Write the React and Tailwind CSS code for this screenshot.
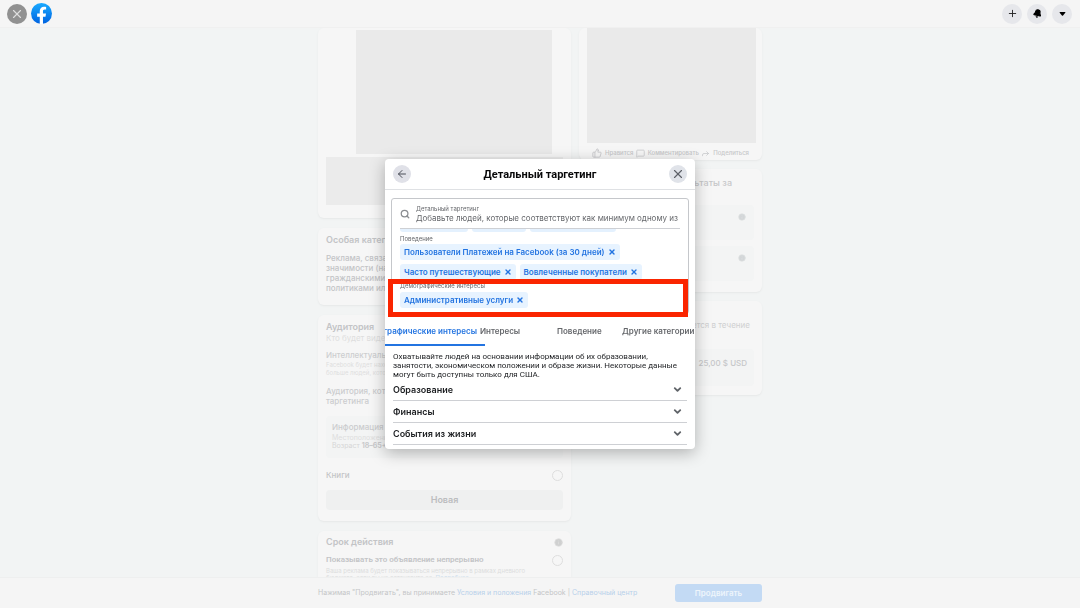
import { ArrowLeft, Bell, ChevronDown, Forward, Info, MessageSquare, Plus, Search, ThumbsUp, X } from "lucide-react";

const behaviorChips = ["Пользователи Платежей на Facebook (за 30 дней)", "Часто путешествующие", "Вовлеченные покупатели"];
const tabs = ["Интересы", "Поведение", "Другие категории"];
const sections = ["Образование", "Финансы", "События из жизни"];

function FacebookLogo() {
  return (
    <svg viewBox="0 0 40 40" className="size-[21px]" aria-label="Facebook">
      <defs>
        <linearGradient id="fb" x1="0" y1="0" x2="0" y2="1">
          <stop offset="0" stopColor="#19aaff" />
          <stop offset="1" stopColor="#0062e0" />
        </linearGradient>
      </defs>
      <circle cx="20" cy="20" r="20" fill="url(#fb)" />
      <path
        fill="#fff"
        d="M16.7 39.8V26H11.7V20h5V15.8c0-5.6 3.1-8.8 8.1-8.8 1.5 0 3 .2 4 .4v5.1h-2.7c-2.5 0-3.3 1.5-3.3 3.2V20h5.8l-1 6h-4.8v13.8a20 20 0 0 1-6.1 0z"
      />
    </svg>
  );
}

function Card({ className = "", children }) {
  return (
    <section className={`shrink-0 rounded-md bg-[#f6f6f6] px-2 shadow-[0_1px_2px_#e6e8e8] ${className}`}>{children}</section>
  );
}

function RoundButton({ label, className = "", children }) {
  return (
    <button type="button" aria-label={label} className={`flex shrink-0 items-center justify-center rounded-full ${className}`}>
      {children}
    </button>
  );
}

function TopBar() {
  return (
    <header className="flex h-7 shrink-0 items-center justify-between border-b border-[#f0f0f0] bg-[#f5f5f5] pr-2 pl-[7px]">
      <div className="flex items-center gap-1">
        <RoundButton label="Закрыть" className="size-5 bg-[#919191] text-[#dedede]">
          <X size={14} strokeWidth={2} />
        </RoundButton>
        <FacebookLogo />
      </div>
      <div className="flex items-center gap-[5px]">
        <RoundButton label="Создать" className="size-5 bg-[#e6e7eb] text-[#222]">
          <Plus size={11} strokeWidth={2} />
        </RoundButton>
        <RoundButton label="Уведомления" className="size-5 bg-[#e6e7eb] text-black">
          <Bell size={9} strokeWidth={3} fill="currentColor" className="rotate-12" />
        </RoundButton>
        <RoundButton label="Аккаунт" className="size-5 bg-[#e6e7eb] text-black">
          <svg viewBox="0 0 8 5" className="h-1 w-[7px]">
            <path d="M1 0h6q1 0 .5 1L4.700 4.400q-.7.700-1.400 0L.5 1Q0 0 1 0z" fill="currentColor" />
          </svg>
        </RoundButton>
      </div>
    </header>
  );
}

function LeftColumn() {
  return (
    <div className="flex w-[253px] flex-col gap-[10px] text-[#c3c4c6]">
      <Card className="h-[190px] pt-0.5">
        <div className="ml-[30px] h-[124px] w-[196px] bg-[#eaeaea]" />
        <div className="mt-[3px] h-12 bg-[#ebebeb]" />
      </Card>

      <Card className="h-[77px] pt-[5px]">
        <h2 className="text-[9px] leading-[14px] font-semibold">Особая категория рекламы</h2>
        <p className="mt-1.5 text-[8px] leading-[10px] font-medium">
          Реклама, связанная с вопросами общественной
          <br />
          значимости (например, с выборами,
          <br />
          гражданскими правами), а также с
          <br />
          политиками или жильем
        </p>
      </Card>

      <Card className="h-[206px] pt-[5px]">
        <h2 className="text-[9px] leading-[14px] font-semibold">Аудитория</h2>
        <p className="text-[8px] leading-2 text-[#dedede]">Кто будет видеть вашу рекламу?</p>
        <h3 className="mt-[7px] text-[8px] leading-3 font-medium text-[#cdced0]">Интеллектуальная аудитория</h3>
        <p className="text-[6px] leading-2 text-[#dedede]">
          Facebook будет находить и показывать
          <br />
          больше людей, которых заинтересует
        </p>
        <h3 className="mt-[9px] text-[8px] leading-[10px] font-medium text-[#cbccce]">
          Аудитория, которую вы выбрали с помощью
          <br />
          таргетинга
        </h3>
        <div className="mt-2.5 h-[42px] rounded bg-[#f3f4f4] px-1.5 pt-1.5">
          <h4 className="text-[8px] leading-[10px] font-medium text-[#cbccce]">Информация об аудитории</h4>
          <p className="mt-0.5 text-[7px] leading-2 text-[#dedede]">Местоположение: Россия</p>
          <p className="text-[7px] leading-2 text-[#d6d6d6]">
            Возраст <b className="text-[#c9cacc]">18–65+</b>
          </p>
        </div>
        <label className="mt-[11px] flex items-center justify-between text-[8px] leading-3 font-medium">
          Книги
          <input type="radio" name="audience" className="size-[11px] appearance-none rounded-full border border-[#dedede]" />
        </label>
        <button type="button" className="mt-[9px] h-5 w-full rounded bg-[#eff0f0] text-[9px] font-semibold text-[#bcbdbf]">
          Новая
        </button>
      </Card>

      <Card className="h-24 pt-1">
        <div className="flex items-center justify-between">
          <h2 className="text-[9px] leading-[14px] font-semibold">Срок действия</h2>
          <Info size={9} fill="#cfd0d0" color="#dedede" />
        </div>
        <label className="mt-1 flex items-center justify-between font-[Roboto,sans-serif] text-[8px] leading-[14px] font-semibold">
          Показывать это объявление непрерывно
          <input type="radio" name="duration" className="size-[11px] appearance-none rounded-full border border-[#dedede]" />
        </label>
        <p className="text-[6px] leading-[7px] text-[#dcdddd]">
          Ваша реклама будет показываться непрерывно в рамках дневного
          <br />
          бюджета, если вы не остановите ее. <a href="#more" className="text-[#cfdeec]">Подробнее</a>
        </p>
      </Card>
    </div>
  );
}

function RightColumn() {
  return (
    <div className="flex w-[183px] flex-col gap-[9px] text-[#c6c7c9]">
      <Card className="h-[132px]">
        <div className="h-[115px] w-[169px] bg-[#eaeaea]" />
        <div className="mt-1 flex items-center justify-between px-[5px] text-[6px] leading-3 font-medium whitespace-nowrap">
          <span className="flex items-center gap-[3px]">
            <ThumbsUp size={10} strokeWidth={2} className="shrink-0" />
            Нравится
          </span>
          <span className="flex items-center gap-[3px]">
            <MessageSquare size={9} strokeWidth={2} className="shrink-0" />
            Комментировать
          </span>
          <span className="flex items-center gap-[3px]">
            <Forward size={9} strokeWidth={2} className="shrink-0" />
            Поделиться
          </span>
        </div>
      </Card>
      <Card className="h-[123px] pt-[7px]">
        <h2 className="pr-[22px] text-right text-[9px] leading-[14px] font-medium">Примерные результаты за</h2>
        <div className="mt-[15px] h-[35px] rounded bg-[#f3f4f4] px-2 pt-2">
          <Info size={8} fill="#d3d6d8" color="#e0e2e3" className="ml-auto" />
        </div>
        <div className="mt-1.5 h-[35px] rounded bg-[#f3f4f4] px-2 pt-2">
          <Info size={8} fill="#d3d6d8" color="#e0e2e3" className="ml-auto" />
        </div>
      </Card>
      <Card className="h-[94px] pt-[18px]">
        <p className="pr-1 text-right text-[8px] leading-3 text-[#cfd0d1]">Реклама показывается в течение</p>
        <div className="mt-[18px] h-[37px] rounded bg-[#f3f4f4] px-[7px] pt-2 text-right text-[8px] leading-3 font-medium">
          25,00 $ USD
        </div>
      </Card>
    </div>
  );
}

function Chip({ children }) {
  return (
    <span className="flex h-4 items-center gap-[3px] rounded-[3px] bg-[#e7f3ff] px-1 text-[8px] font-semibold whitespace-nowrap text-[#2374e1]">
      {children}
      <button type="button" aria-label={`Удалить: ${children}`}>
        <X size={8} strokeWidth={4} />
      </button>
    </span>
  );
}

function TargetingField() {
  return (
    <div className="relative mx-1.5 mt-2 h-[116px] rounded-[3px] border border-[#c5c7cb] bg-white px-2">
      <div className="flex h-[30px] items-center border-b border-[#ced0d4]">
        <Search size={10} strokeWidth={3} className="mr-1.5 shrink-0 text-[#8a8d91]" />
        <div className="min-w-0 flex-1">
          <label htmlFor="targeting" className="block text-[6px] leading-2 text-[#65676b]">
            Детальный таргетинг
          </label>
          <input
            id="targeting"
            type="text"
            className="block w-full text-[8px] leading-[10px] outline-none placeholder:text-[#65676b]"
            placeholder="Добавьте людей, которые соответствуют как минимум одному из"
          />
        </div>
      </div>
      <div className="flex h-[3px] gap-1">
        <div className="w-17 rounded-b-sm bg-[#e4f1fe]" />
        <div className="w-[54px] rounded-b-sm bg-[#e4f1fe]" />
        <div className="w-[86px] rounded-b-sm bg-[#e4f1fe]" />
      </div>
      <p className="mt-[3px] text-[6px] leading-2 text-[#65676b]">Поведение</p>
      <div className="mt-px flex flex-wrap gap-x-1 gap-y-1">
        {behaviorChips.map((name) => (
          <Chip key={name}>{name}</Chip>
        ))}
      </div>
      <p className="mt-0.5 text-[6px] leading-2 text-[#65676b]">Демографические интересы</p>
      <div className="mt-0.5 flex">
        <Chip>Административные услуги</Chip>
      </div>
      <div className="pointer-events-none absolute top-20 right-0 -left-1 h-[38px] border-[5px] border-[#fa2500]" />
    </div>
  );
}

function TargetingDialog() {
  return (
    <div
      role="dialog"
      aria-labelledby="dialog-title"
      className="w-[310px] overflow-hidden rounded-[4px] bg-white shadow-[0_4px_16px_rgba(0,0,0,0.28)]"
    >
      <div className="flex h-[31px] items-center justify-between border-b border-[#dfe1e4] px-2">
        <RoundButton label="Назад" className="size-[18px] bg-[#e0e1e8] text-[#4b4f58]">
          <ArrowLeft size={12} strokeWidth={2} />
        </RoundButton>
        <h1 id="dialog-title" className="pt-0.5 font-[Roboto,sans-serif] text-[11px] leading-[14px] font-bold text-[#080809]">
          Детальный таргетинг
        </h1>
        <RoundButton label="Закрыть окно" className="size-[18px] bg-[#e0e3e9] text-[#5d6168]">
          <X size={14} strokeWidth={2} />
        </RoundButton>
      </div>

      <TargetingField />

      <div role="tablist" className="mt-2 flex h-[22px] text-[8px] leading-[18px] font-semibold whitespace-nowrap text-[#65676b]">
        <button type="button" role="tab" aria-selected="true" className="flex w-[95px] shrink-0 justify-end pr-[3px] text-[#2374e1]">
          Демографические интересы
        </button>
        {tabs.map((name) => (
          <button key={name} type="button" role="tab" aria-selected="false" className="flex w-[77px] shrink-0 last:w-auto nth-3:w-[65px]">
            {name}
          </button>
        ))}
      </div>
      <div className="h-0.5 w-[100px] bg-[#2374e1]" />

      <div className="px-2 pt-1.5 pb-1">
        <p className="font-[Roboto,sans-serif] text-[8px] leading-[9px] whitespace-nowrap text-[#1c1e21]">
          Охватывайте людей на основании информации об их образовании,
          <br />
          занятости, экономическом положении и образе жизни. Некоторые данные
          <br />
          могут быть доступны только для США.
        </p>
        {sections.map((name) => (
          <button
            key={name}
            type="button"
            className="flex h-[22px] w-full items-center justify-between border-b border-[#ced0d4] pr-1 text-[9px] font-semibold text-[#1c1e21]"
          >
            {name}
            <ChevronDown size={11} strokeWidth={4} className="text-[#606469]" />
          </button>
        ))}
      </div>
    </div>
  );
}

export default function App() {
  return (
    <div className="flex h-screen flex-col overflow-hidden bg-[#f2f4f4] font-[Inter,sans-serif]">
      <TopBar />
      <main className="flex min-h-0 flex-1 justify-center gap-2 overflow-hidden">
        <LeftColumn />
        <RightColumn />
      </main>
      <footer className="flex h-[31px] shrink-0 items-center justify-center border-t border-[#eeefef] bg-[#f5f5f5]">
        <div className="flex w-[444px] items-center justify-between text-[7px] text-[#c4c5c7]">
          <p className="whitespace-nowrap">
            Нажимая "Продвигать", вы принимаете <a href="#terms" className="text-[#b7d0ea]">Условия и положения</a> Facebook |{" "}
            <a href="#help" className="text-[#b7d0ea]">Справочный центр</a>
          </p>
          <button type="button" className="h-[18px] w-[87px] rounded-[3px] bg-[#c3daf4] text-[8px] font-semibold text-[#eef5fb]">
            Продвигать
          </button>
        </div>
      </footer>

      <div className="fixed inset-0 flex items-center justify-center">
        <TargetingDialog />
      </div>
    </div>
  );
}
